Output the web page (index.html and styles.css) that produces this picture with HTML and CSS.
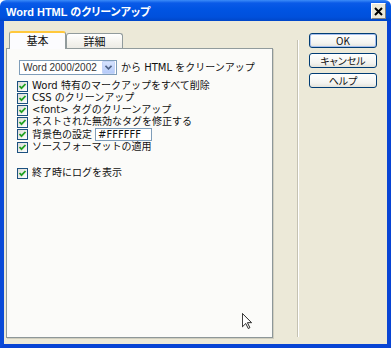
FILE: index.html
```html
<!DOCTYPE html>
<html lang="ja">
<head>
	<meta charset="utf-8">
	<title>Word HTML のクリーンアップ</title>
	<link rel="stylesheet" href="styles.css">
</head>
<body>
	<div class="window">
		<div class="titleBar">
			<span class="titleText">Word HTML のクリーンアップ</span>
			<span class="closeBtn">
				<svg width="9" height="9" viewBox="0 0 9 9"><path d="M1 1 L8 8 M8 1 L1 8" stroke="#000" stroke-width="2"/></svg>
			</span>
		</div>
		<div class="frame">
			<div class="client">
				<div class="tabArea">
					<div class="tabs">
						<div class="tab selected">基本</div>
						<div class="tab">詳細</div>
					</div>
					<div class="panel">
						<div class="comboRow">
							<div class="combo">
								<span class="comboText">Word 2000/2002</span>
								<span class="comboArrow">
									<svg width="7" height="5" viewBox="0 0 7 5"><path d="M0.5 0.8 L3.5 3.8 L6.5 0.8" fill="none" stroke="#4d6185" stroke-width="1.6"/></svg>
								</span>
							</div>
							<span class="comboLabel">から HTML をクリーンアップ</span>
						</div>
						<div class="checks">
							<div class="check"><span class="box"><svg width="9" height="9" viewBox="0 0 9 9"><path d="M1.5 4 L3.5 6.2 L7.5 2" fill="none" stroke="#21a121" stroke-width="1.8"/></svg></span>Word 特有のマークアップをすべて削除</div>
							<div class="check"><span class="box"><svg width="9" height="9" viewBox="0 0 9 9"><path d="M1.5 4 L3.5 6.2 L7.5 2" fill="none" stroke="#21a121" stroke-width="1.8"/></svg></span>CSS のクリーンアップ</div>
							<div class="check"><span class="box"><svg width="9" height="9" viewBox="0 0 9 9"><path d="M1.5 4 L3.5 6.2 L7.5 2" fill="none" stroke="#21a121" stroke-width="1.8"/></svg></span>&lt;font&gt; タグのクリーンアップ</div>
							<div class="check"><span class="box"><svg width="9" height="9" viewBox="0 0 9 9"><path d="M1.5 4 L3.5 6.2 L7.5 2" fill="none" stroke="#21a121" stroke-width="1.8"/></svg></span>ネストされた無効なタグを修正する</div>
							<div class="check tall"><span class="box"><svg width="9" height="9" viewBox="0 0 9 9"><path d="M1.5 4 L3.5 6.2 L7.5 2" fill="none" stroke="#21a121" stroke-width="1.8"/></svg></span>背景色の設定<span class="colorField">#FFFFFF</span></div>
							<div class="check"><span class="box"><svg width="9" height="9" viewBox="0 0 9 9"><path d="M1.5 4 L3.5 6.2 L7.5 2" fill="none" stroke="#21a121" stroke-width="1.8"/></svg></span>ソースフォーマットの適用</div>
							<div class="check spaced"><span class="box"><svg width="9" height="9" viewBox="0 0 9 9"><path d="M1.5 4 L3.5 6.2 L7.5 2" fill="none" stroke="#21a121" stroke-width="1.8"/></svg></span>終了時にログを表示</div>
						</div>
					</div>
				</div>
				<div class="separator"></div>
				<div class="buttons">
					<div class="btn default">OK</div>
					<div class="btn">キャンセル</div>
					<div class="btn">ヘルプ</div>
				</div>
			</div>
		</div>
		<!-- mouse pointer -->
		<svg class="cursor" width="10" height="16" viewBox="0 0 12 19"><path d="M0.5 0.5 L0.5 16.5 L4.5 12.5 L7.5 18.5 L9.5 17.5 L6.5 11.5 L11.5 11.5 Z" fill="#fff" stroke="#000" stroke-width="1"/></svg>
	</div>
</body>
</html>
```

FILE: styles.css
```css
body {
	margin: 0;
	font-family: "DejaVu Sans", "Noto Sans CJK JP", sans-serif;
	font-size: 10px;
	color: #111;
}

div.window {
	position: relative;
	width: 391px;
	height: 348px;
	display: flex;
	flex-direction: column;
}

div.titleBar {
	height: 21px;
	display: flex;
	align-items: center;
	justify-content: space-between;
	padding: 0 6px 0 6px;
	background: linear-gradient(#3c8cf8 0, #0a5ae8 3px, #0054e3 9px, #0050dc 17px, #0046c8 21px);
	border-radius: 6px 6px 0 0;
}

span.titleText {
	color: #fff;
	font-family: "Liberation Sans", "Noto Sans CJK JP", sans-serif;
	font-feature-settings: "palt";
	font-weight: bold;
	font-size: 11px;
	margin-top: 1px;
}

span.closeBtn {
	width: 13px;
	height: 14px;
	display: flex;
	align-items: center;
	justify-content: center;
	background: #ece9d8;
	border: 1px solid #fff;
	border-right-color: #808080;
	border-bottom-color: #808080;
	margin-right: -1px;
	margin-top: 1px;
}

div.frame {
	flex: 1;
	display: flex;
	border: 4px solid #0844d4;
	border-top: none;
	border-left-color: #0a4ad8;
}

div.client {
	flex: 1;
	display: flex;
	background: #ece9d8;
	padding: 10px 10px 0 2px;
}

div.tabArea {
	width: 267px;
	display: flex;
	flex-direction: column;
}

div.tabs {
	position: relative;
	z-index: 1;
	height: 18px;
	margin-bottom: -1px;
	padding-left: 3px;
	display: flex;
	align-items: flex-end;
}

div.tab {
	height: 14px;
	width: 55px;
	margin-bottom: 1px;
	border: 1px solid #919b9c;
	border-bottom: none;
	border-radius: 3px 3px 0 0;
	background: linear-gradient(#fff, #f4f3ee 60%, #ecebe5);
	text-align: center;
	line-height: 15px;
	font-family: "Noto Sans CJK JP", sans-serif;
	font-size: 11px;
}

div.tab.selected {
	margin-bottom: 0;
	border-top: 2px solid #ffc83c;
	background: #fcfcfe;
	line-height: 14px;
	padding-bottom: 2px;
	height: 14px;
}

div.panel {
	height: 277px;
	border: 1px solid #919b9c;
	border-right-color: #8d9799;
	border-bottom-color: #8d9799;
	box-shadow: 1px 1px 0 #d0cebf;
	background: #fbfbf9;
	padding: 11px 0 0 10px;
}

div.comboRow {
	display: flex;
	align-items: center;
	margin-left: 2px;
}

div.combo {
	width: 93px;
	height: 13px;
	border: 1px solid #7f9db9;
	background: #fff;
	display: flex;
	align-items: center;
	justify-content: space-between;
	padding-left: 3px;
}

span.comboText {
	font-family: "Liberation Sans", sans-serif;
	font-size: 10px;
	line-height: 13px;
	color: #333;
}

span.comboArrow {
	width: 11px;
	height: 11px;
	margin-right: 1px;
	display: flex;
	align-items: center;
	justify-content: center;
	background: linear-gradient(#d5e2fd, #b6cbf9);
	border: 1px solid #c4d4f7;
	border-radius: 1px;
}

span.comboLabel {
	margin-left: 4px;
	line-height: 13px;
}

div.checks {
	margin-top: 5px;
	display: flex;
	flex-direction: column;
}

div.check {
	height: 12px;
	display: flex;
	align-items: center;
	line-height: 12px;
	white-space: nowrap;
}

div.check.tall {
	height: 13px;
}

div.check.spaced {
	margin-top: 14px;
}

span.box {
	width: 9px;
	height: 9px;
	border: 1px solid #1c5180;
	background: linear-gradient(135deg, #dcdcd7, #fff);
	display: flex;
	margin-right: 4px;
	flex-shrink: 0;
}

span.colorField {
	display: inline-block;
	width: 53px;
	height: 11px;
	margin-left: 3px;
	padding-left: 2px;
	border: 1px solid #7f9db9;
	background: #fff;
	line-height: 11px;
	font-size: 10px;
}

div.separator {
	width: 1px;
	margin: 9px 0 7px 24px;
	background: #c5c2b2;
	border-right: 1px solid #fff;
}

div.buttons {
	margin-left: 10px;
	padding-top: 2px;
	display: flex;
	flex-direction: column;
	gap: 5px;
}

div.btn {
	width: 66px;
	height: 13px;
	border: 1px solid #003c74;
	border-radius: 3px;
	background: linear-gradient(#fff, #f4f4f0 70%, #e3e2da);
	text-align: center;
	line-height: 13px;
	font-family: "Noto Sans CJK JP", sans-serif;
	font-feature-settings: "palt";
	font-size: 10px;
}

div.btn.default {
	box-shadow: inset 0 0 0 1px #a8c0ee;
}

svg.cursor {
	position: absolute;
	left: 242px;
	top: 313px;
}
```
